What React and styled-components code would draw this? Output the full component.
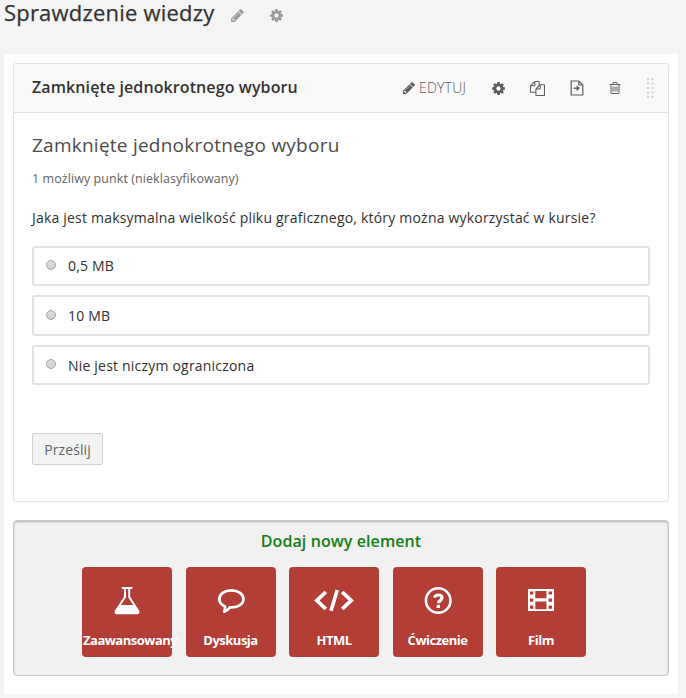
import React from "react";
import styled, { createGlobalStyle } from "styled-components";

const GlobalStyle = createGlobalStyle`
  * { box-sizing: border-box; }
  body {
    margin: 0;
    background: #f4f4f4;
    font-family: "Open Sans", sans-serif;
    color: #222;
  }
  h1, h2, h3, p { margin: 0; }
`;

const Page = styled.div`
  display: flex;
  flex-direction: column;
  width: 686px;
  height: 698px;
  padding: 0 8px 4px 4px;
`;

const PageHeader = styled.header`
  display: flex;
  align-items: flex-start;
  height: 54px;
  color: #9c9c9c;
`;

const PageTitle = styled.h1`
  width: 226px;
  font-size: 22px;
  font-weight: 500;
  line-height: 25px;
  letter-spacing: 0.2px;
  white-space: nowrap;
  color: #333;
  -webkit-text-stroke: 0.25px #333;
`;

const HeaderIcon = styled.span`
  display: flex;
  width: 39px;
  padding-top: 8px;
`;

const Content = styled.main`
  display: flex;
  flex-direction: column;
  gap: 18px;
  flex: 1;
  padding: 9px 9px 18px;
  background: #fff;
`;

const Card = styled.section`
  height: 439px;
  border: 1px solid #e2e2e2;
  border-radius: 3px;
`;

const CardHeader = styled.header`
  display: flex;
  align-items: center;
  justify-content: space-between;
  height: 49px;
  padding: 0 1px 0 18px;
  border-bottom: 1px solid #e2e2e2;
  border-radius: 3px 3px 0 0;
  background: #f9f9f9;
`;

const CardTitle = styled.h2`
  margin-top: -2px;
  font-size: 16px;
  font-weight: 600;
  line-height: 24px;
  letter-spacing: 0.1px;
  white-space: nowrap;
  color: #333;
`;

const Actions = styled.div`
  display: flex;
  align-items: center;
  color: #5c5c5c;
`;

const Action = styled.span`
  display: flex;
  align-items: center;
  justify-content: center;
  width: ${(p) => p.$width}px;
`;

const EditAction = styled.span`
  display: flex;
  align-items: center;
  gap: 3px;
  width: 78px;
  font-size: 14px;
  font-weight: 300;
  line-height: 20px;
  letter-spacing: 0.2px;
  white-space: nowrap;
`;

const Problem = styled.div`
  display: flex;
  flex-direction: column;
  align-items: flex-start;
  padding: 18px;
`;

const ProblemTitle = styled.h3`
  font-size: 19px;
  font-weight: 400;
  line-height: 28px;
  letter-spacing: 0.24px;
  white-space: nowrap;
  color: #4c4c4c;
`;

const Progress = styled.p`
  margin-top: 10px;
  font-size: 12.5px;
  line-height: 20px;
  letter-spacing: 0.07px;
  white-space: nowrap;
  color: #646464;
`;

const Question = styled.p`
  margin-top: 18px;
  font-size: 14px;
  line-height: 22px;
  letter-spacing: 0.2px;
  white-space: nowrap;
  color: #313131;
`;

const Choices = styled.div`
  display: flex;
  flex-direction: column;
  gap: 9px;
  width: 618px;
  margin-top: 17px;
`;

const Choice = styled.label`
  display: flex;
  align-items: center;
  gap: 12px;
  height: ${(p) => p.$height}px;
  padding: ${(p) => p.$drop}px 12px 0;
  border: 2px solid #e3e3e3;
  border-radius: 3px;
  font-size: 14px;
  line-height: 22px;
  letter-spacing: 0.2px;
  color: #313131;
`;

const Radio = styled.span`
  width: 10px;
  height: 10px;
  margin-top: ${(p) => -2 - p.$drop}px;
  border: 1px solid #a5a5a5;
  border-radius: 50%;
  background: linear-gradient(#dedede, #d2d2d2);
`;

const Submit = styled.button`
  width: 71px;
  height: 32px;
  margin-top: 48px;
  padding: 2px 0 0;
  border: 1px solid #d2cfcf;
  border-radius: 2px;
  background: #f2f4f4;
  font: 400 14px/20px "Open Sans", sans-serif;
  letter-spacing: 0.1px;
  color: #636363;
`;

const AddPanel = styled.section`
  display: flex;
  flex-direction: column;
  align-items: center;
  height: 156px;
  padding: 8px 0;
  border: 1px solid #c8c8c8;
  border-radius: 4px;
  background: #f1f1f1;
  box-shadow: inset 0 1px 2px 0 rgba(0, 0, 0, 0.28);
`;

const AddTitle = styled.h3`
  font-size: 16px;
  font-weight: 600;
  line-height: 24px;
  letter-spacing: 0.08px;
  color: #128012;
`;

const Tiles = styled.div`
  display: flex;
  gap: 13.5px;
  margin: 14px 14px 0 0;
`;

const Tile = styled.button`
  display: flex;
  flex-direction: column;
  align-items: center;
  width: 90px;
  height: 90px;
  padding: 15px 0 0;
  border: 0;
  border-radius: 4px;
  background: #b23e36;
  color: #fff;
`;

const TileLabel = styled.span`
  margin-top: 11px;
  font: 700 13px/20px "Open Sans", sans-serif;
  letter-spacing: -0.5px;
  white-space: nowrap;
`;

const WideLabel = styled(TileLabel)`
  align-self: flex-start;
  margin-left: 1px;
`;

const paths = {
  pencil:
    "M491 1536l91-91-235-235-91 91v107h128v128h107zm523-928q0-22-22-22-10 0-17 7l-542 542q-7 7-7 17 0 22 22 22 10 0 17-7l542-542q7-7 7-17zm-54-192l416 416-832 832h-416v-416zm683 96q0 53-37 90l-166 166-416-416 166-165q36-38 90-38 53 0 91 38l235 234q37 39 37 91z",
  cog: "M1152 896q0-106-75-181t-181-75-181 75-75 181 75 181 181 75 181-75 75-181zm512-109v222q0 12-8 23t-20 13l-185 28q-19 54-39 91 35 50 107 138 10 12 10 25t-9 23q-27 37-99 108t-94 71q-12 0-26-9l-138-108q-44 23-91 38-16 136-29 186-7 28-36 28h-222q-14 0-24.5-8.5t-11.5-21.5l-28-184q-49-16-90-37l-141 107q-10 9-25 9-14 0-25-11-126-114-165-168-7-10-7-23 0-12 8-23 15-21 51-66.5t54-70.5q-27-50-41-99l-183-27q-13-2-21-12.5t-8-23.5v-222q0-12 8-23t19-13l186-28q14-46 39-92-40-57-107-138-10-12-10-24 0-10 9-23 26-36 98.5-107.5t94.5-71.5q13 0 26 10l138 107q44-23 91-38 16-136 29-186 7-28 36-28h222q14 0 24.5 8.5t11.5 21.5l28 184q49 16 90 37l142-107q9-9 24-9 13 0 25 10 129 119 165 170 7 8 7 22 0 12-8 23-15 21-51 66.5t-54 70.5q26 50 41 98l183 28q13 2 21 12.5t8 23.5z",
  files:
    "M1696 384q40 0 68 28t28 68v1216q0 40-28 68t-68 28h-960q-40 0-68-28t-28-68v-288h-544q-40 0-68-28t-28-68v-672q0-40 20-88t48-76l408-408q28-28 76-48t88-20h416q40 0 68 28t28 68v328q68-40 128-40h416zm-544 213l-299 299h299v-299zm-640-384l-299 299h299v-299zm196 647l316-316v-416h-384v416q0 40-28 68t-68 28h-416v640h512v-256q0-40 20-88t48-76zm956 804v-1152h-384v416q0 40-28 68t-68 28h-416v640h896z",
  trash:
    "M704 736v576q0 14-9 23t-23 9h-64q-14 0-23-9t-9-23v-576q0-14 9-23t23-9h64q14 0 23 9t9 23zm256 0v576q0 14-9 23t-23 9h-64q-14 0-23-9t-9-23v-576q0-14 9-23t23-9h64q14 0 23 9t9 23zm256 0v576q0 14-9 23t-23 9h-64q-14 0-23-9t-9-23v-576q0-14 9-23t23-9h64q14 0 23 9t9 23zm128 724v-948h-896v948q0 22 7 40.5t14.5 27 10.5 8.5h832q3 0 10.5-8.5t14.5-27 7-40.5zm-672-1076h448l-48-117q-7-9-17-11h-317q-10 2-17 11zm928 32v64q0 14-9 23t-23 9h-96v948q0 83-47 143.5t-113 60.5h-832q-66 0-113-58.5t-47-141.5v-952h-96q-14 0-23-9t-9-23v-64q0-14 9-23t23-9h309l70-167q15-37 54-63t79-26h320q40 0 79 26t54 63l70 167h309q14 0 23 9t9 23z",
};

const Glyph = ({ name, size = 14 }) => (
  <svg width={size} height={size} viewBox="0 0 1792 1792" fill="currentColor">
    <path d={paths[name]} />
  </svg>
);

const MoveIcon = () => (
  <svg width="14" height="16" viewBox="0 0 14 16" fill="none" stroke="currentColor" strokeWidth="1.2">
    <path d="M1.2 1h7.6l4 4v10H1.2zM8.8 1v4h4" />
    <path d="M3.5 8.2h5" strokeWidth="1.4" />
    <path d="M6.6 5.2 9.8 8.2 6.6 11.2z" fill="currentColor" stroke="none" />
  </svg>
);

const DragHandle = () => (
  <svg width="7" height="20" viewBox="0 0 7 20" fill="#d0d3dc">
    {[0, 4.5, 9, 13.5, 18].map((y) => (
      <React.Fragment key={y}>
        <rect x="0" y={y} width="2" height="2" />
        <rect x="4.4" y={y} width="2" height="2" />
      </React.Fragment>
    ))}
  </svg>
);

const TileIcon = ({ children }) => (
  <svg width="42" height="37" viewBox="0 0 42 37" fill="none" stroke="currentColor">
    {children}
  </svg>
);

const FlaskIcon = () => (
  <TileIcon>
    <path d="M15.8 5.9h10.6M19 6v9L9.7 29.3Q8.9 31.3 11 31.3h20q2.1 0 1.3-2L23.2 15V6" strokeWidth="2" />
    <path d="M14.5 23h13l5 7-1 1.5H10.5l-1-1.5z" fill="currentColor" stroke="none" />
  </TileIcon>
);

const CommentIcon = () => (
  <TileIcon>
    <path d="M21.3 8.3c-7 0-12 3.8-12 8.7 0 3.2 2.1 5.8 5.7 7.4.3 2-.2 3.5-.8 5.2 2.6-.9 4.3-2.2 5.6-4.2 7.9.5 13.7-3.2 13.7-8.4 0-4.9-5.2-8.7-12.2-8.7z" strokeWidth="2.7" strokeLinejoin="round" />
  </TileIcon>
);

const CodeIcon = () => (
  <TileIcon>
    <path d="m12.8 10-8.9 8.5L12.8 27M29.2 10l8.9 8.5L29.2 27" strokeWidth="3.8" />
    <path d="m24.3 8-6.3 20.8" strokeWidth="3.6" />
  </TileIcon>
);

const HelpIcon = () => (
  <TileIcon>
    <circle cx="21.2" cy="18.5" r="12.3" strokeWidth="2.6" />
    <path d="M17.5 15.6c.5-2 1.8-2.6 3.8-2.6 2.3 0 3.7 1 3.7 2.8 0 2.6-3.5 2.6-3.5 5.5" strokeWidth="3.2" />
    <path d="M19.6 22.8H23v3.2h-3.4z" fill="currentColor" stroke="none" />
  </TileIcon>
);

const FilmIcon = () => (
  <TileIcon>
    <path
      d="M8 7h26v22H8zM10 9.5v3h3.3v-3zm0 7v3.2h3.3v-3.2zm0 7v3.2h3.3v-3.2zM15.3 9v7.2h11.2V9zm0 10.5v7.7h11.2v-7.7zm13.3-10v3H32v-3zm0 7v3.2H32v-3.2zm0 7v3.2H32v-3.2z"
      fill="currentColor"
      fillRule="evenodd"
      stroke="none"
    />
  </TileIcon>
);

const choices = [
  { label: "0,5 MB", height: 40, drop: 0 },
  { label: "10 MB", height: 41, drop: 0 },
  { label: "Nie jest niczym ograniczona", height: 40, drop: 2 },
];

const tiles = [
  { label: "Zaawansowany", icon: FlaskIcon, Label: WideLabel },
  { label: "Dyskusja", icon: CommentIcon, Label: TileLabel },
  { label: "HTML", icon: CodeIcon, Label: TileLabel },
  { label: "Ćwiczenie", icon: HelpIcon, Label: TileLabel },
  { label: "Film", icon: FilmIcon, Label: TileLabel },
];

export default function App() {
  return (
    <Page>
      <GlobalStyle />
      <PageHeader>
        <PageTitle>Sprawdzenie wiedzy</PageTitle>
        <HeaderIcon><Glyph name="pencil" size={15} /></HeaderIcon>
        <HeaderIcon><Glyph name="cog" size={15} /></HeaderIcon>
      </PageHeader>
      <Content>
        <Card>
          <CardHeader>
            <CardTitle>Zamknięte jednokrotnego wyboru</CardTitle>
            <Actions>
              <EditAction><Glyph name="pencil" />EDYTUJ</EditAction>
              <Action $width={37}><Glyph name="cog" size={15} /></Action>
              <Action $width={41}><Glyph name="files" size={15} /></Action>
              <Action $width={38}><MoveIcon /></Action>
              <Action $width={38}><Glyph name="trash" /></Action>
              <Action $width={33}><DragHandle /></Action>
            </Actions>
          </CardHeader>
          <Problem>
            <ProblemTitle>Zamknięte jednokrotnego wyboru</ProblemTitle>
            <Progress>1 możliwy punkt (nieklasyfikowany)</Progress>
            <Question>Jaka jest maksymalna wielkość pliku graficznego, który można wykorzystać w kursie?</Question>
            <Choices>
              {choices.map((c) => (
                <Choice key={c.label} $height={c.height} $drop={c.drop}>
                  <Radio $drop={c.drop} />
                  {c.label}
                </Choice>
              ))}
            </Choices>
            <Submit>Prześlij</Submit>
          </Problem>
        </Card>
        <AddPanel>
          <AddTitle>Dodaj nowy element</AddTitle>
          <Tiles>
            {tiles.map(({ label, icon: Icon, Label }) => (
              <Tile key={label}>
                <Icon />
                <Label>{label}</Label>
              </Tile>
            ))}
          </Tiles>
        </AddPanel>
      </Content>
    </Page>
  );
}
